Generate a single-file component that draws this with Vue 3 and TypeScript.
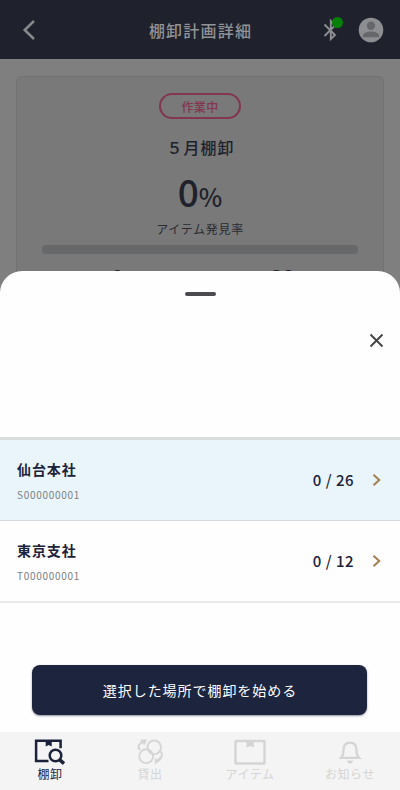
<script setup lang="ts">
interface Place {
  name: string
  code: string
  found: number
  total: number
  selected: boolean
}

interface Tab {
  id: 'stock' | 'lend' | 'item' | 'notice'
  label: string
}

const places: Place[] = [
  { name: '仙台本社', code: 'S000000001', found: 0, total: 26, selected: true },
  { name: '東京支社', code: 'T000000001', found: 0, total: 12, selected: false },
]

const tabs: Tab[] = [
  { id: 'stock', label: '棚卸' },
  { id: 'lend', label: '貸出' },
  { id: 'item', label: 'アイテム' },
  { id: 'notice', label: 'お知らせ' },
]
</script>

<template>
  <div class="phone">
    <div class="backdrop">
      <header class="header">
        <svg class="back" width="14" height="22" viewBox="0 0 14 22"><path d="M12 2 2.700 11l9.300 9" /></svg>
        <h1 class="title">棚卸計画詳細</h1>
        <div class="tools">
          <span class="bluetooth">
            <svg width="16" height="24" viewBox="0 0 16 24"><path d="M2.500 6.500l10.500 10.500-4.200 4V3l4.200 4.500L2.500 18" /></svg>
            <i class="dot"></i>
          </span>
          <svg class="avatar" width="26" height="26" viewBox="0 0 26 26">
            <circle cx="13" cy="13" r="12.3" fill="#8d8e91" />
            <circle cx="13" cy="8.7" r="4.2" fill="#66676a" />
            <path d="M4.8 20.3v-1.2c0-2.8 4.2-4.5 8.2-4.5s8.2 1.7 8.2 4.5v1.2z" fill="#66676a" />
          </svg>
        </div>
      </header>
      <section class="card">
        <span class="status">作業中</span>
        <h2 class="plan">５月棚卸</h2>
        <div class="rate"><b>0</b><span>%</span></div>
        <div class="caption">アイテム発見率</div>
        <div class="progress"></div>
        <div class="counts"><b>0</b><b>38</b></div>
      </section>
    </div>

    <div class="sheet">
      <div class="sheet-head">
        <i class="handle"></i>
        <svg class="close" width="15" height="15" viewBox="0 0 15 15"><path d="M1.500 1.500l12 12M13.500 1.500l-12 12" /></svg>
      </div>
      <ul class="places">
        <li v-for="place in places" :key="place.code" class="place" :class="{ selected: place.selected }">
          <div class="place-text">
            <div class="name">{{ place.name }}</div>
            <div class="code">{{ place.code }}</div>
          </div>
          <div class="count">{{ place.found }} / {{ place.total }}</div>
          <svg class="chevron" width="9" height="14" viewBox="0 0 9 14"><path d="M1.500 1.700 7.200 7l-5.700 5.300" /></svg>
        </li>
      </ul>
      <button class="start">選択した場所で棚卸を始める</button>
      <nav class="tabs">
        <div v-for="tab in tabs" :key="tab.id" class="tab" :class="{ active: tab.id === 'stock' }">
          <svg v-if="tab.id === 'stock'" width="32" height="28" viewBox="0 0 32 28" fill="none" stroke="currentColor">
            <path d="M14.500 24H2.100V3.700h24.500v7.500" stroke-width="2.500" />
            <path d="M11.700 3h6v6.500l-3-1.400-3 1.400z" fill="currentColor" stroke="none" />
            <circle cx="21.500" cy="18.500" r="5.800" stroke-width="2.500" />
            <path d="M25.500 22.600l4.500 4" stroke-width="3.500" />
          </svg>
          <svg v-else-if="tab.id === 'lend'" width="32" height="28" viewBox="0 0 32 28" fill="none" stroke="currentColor" stroke-width="1.900">
            <circle cx="20.200" cy="10.300" r="6.800" />
            <circle cx="12.200" cy="19.200" r="6.900" />
            <path d="M6 13.200C2.800 9.500 5 5.500 11.500 4.500M6.500 3.500h5.200l-2 4" />
            <path d="M26.600 14.200c2.600 3.500 1.200 8.800-5.300 11.300M27.500 19.500l-5.700 6v-4" />
          </svg>
          <svg v-else-if="tab.id === 'item'" width="32" height="28" viewBox="0 0 32 28" fill="none" stroke="currentColor">
            <rect x="1.500" y="4" width="29" height="22.400" rx="0.500" stroke-width="2.500" />
            <path d="M12.500 3.500h7.200v7l-3.600-1.400-3.600 1.400z" fill="currentColor" stroke="none" />
          </svg>
          <svg v-else width="32" height="28" viewBox="0 0 32 28" fill="none" stroke="currentColor" stroke-width="2.300">
            <path d="M7 20.800c2.400-2.200 2.500-4 2.500-7.700 0-4.800 2.600-7.400 6.500-7.400s6.500 2.600 6.500 7.400c0 3.700.1 5.500 2.500 7.700z" />
            <path d="M13 23.500h6c-.3 4-5.700 4-6 0z" fill="currentColor" stroke="none" />
          </svg>
          <span>{{ tab.label }}</span>
        </div>
      </nav>
    </div>
  </div>
</template>

<style>
body {
  margin: 0;
}
</style>

<style scoped>
.phone {
  position: relative;
  width: 400px;
  height: 790px;
  overflow: hidden;
  background: #7f7f7f;
  font-family: "Noto Sans CJK JP", sans-serif;
  color: #1d223b;
}
.header {
  display: grid;
  grid-template-columns: 100px 1fr 100px;
  align-items: center;
  height: 59px;
  box-sizing: border-box;
  padding-top: 1px;
  background: #1f212d;
}
.back {
  margin-left: 22px;
  fill: none;
  stroke: #88898c;
  stroke-width: 2.500;
}
.title {
  margin: 0;
  padding-left: 1px;
  font-size: 16px;
  line-height: 24px;
  font-weight: 500;
  letter-spacing: 1.200px;
  text-align: center;
  color: #929396;
}
.tools {
  display: flex;
  align-items: center;
  gap: 12px;
  padding-left: 22px;
}
.bluetooth {
  position: relative;
  display: flex;
  width: 24px;
}
.bluetooth svg {
  fill: none;
  stroke: #8d8e91;
  stroke-width: 1.900;
}
.dot {
  position: absolute;
  left: 10px;
  top: -1px;
  width: 11px;
  height: 11px;
  border-radius: 50%;
  background: #078009;
}
.card {
  display: flex;
  flex-direction: column;
  align-items: center;
  box-sizing: border-box;
  width: 368px;
  height: 240px;
  margin: 17px 16px 0;
  padding-top: 16px;
  border: 1px solid #707273;
  border-radius: 6px;
  background: #797979;
}
.status {
  box-sizing: border-box;
  width: 82px;
  height: 26px;
  border: 2px solid #82364f;
  border-radius: 13px;
  font-size: 12px;
  line-height: 23px;
  font-weight: 500;
  letter-spacing: 0.300px;
  text-align: center;
  color: #82364f;
}
.plan {
  margin: 16px 0 0 1px;
  font-size: 16px;
  line-height: 24px;
  font-weight: 500;
  letter-spacing: 1px;
  color: #20222b;
}
.rate {
  display: flex;
  align-items: baseline;
  height: 55px;
  margin-top: 5px;
  line-height: 55px;
  color: #20222b;
}
.rate b {
  font-size: 37px;
  font-weight: 500;
}
.rate span {
  font-size: 25px;
  font-weight: 500;
}
.caption {
  margin-top: 1px;
  font-size: 12px;
  line-height: 18px;
  letter-spacing: 0.700px;
  color: #2a2c33;
}
.progress {
  flex: none;
  width: 316px;
  height: 9px;
  margin-top: 7px;
  border-radius: 4px;
  background: #666869;
}
.counts {
  display: flex;
  width: 330px;
  margin-top: 7px;
  font-size: 20px;
  line-height: 31px;
  text-align: center;
  color: #20222b;
}
.counts b {
  flex: 1;
}
.sheet {
  position: absolute;
  left: 0;
  right: 0;
  top: 271px;
  bottom: 0;
  display: flex;
  flex-direction: column;
  border-radius: 22px 22px 0 0;
  overflow: hidden;
  background: #fefefe;
}
.sheet-head {
  display: flex;
  flex-direction: column;
  box-sizing: border-box;
  height: 169px;
  padding-top: 21px;
  border-bottom: 3px solid #d9dddd;
}
.handle {
  align-self: center;
  width: 31px;
  height: 4px;
  border-radius: 2px;
  background: #4b4a4e;
}
.close {
  align-self: flex-end;
  margin: 37px 16px 0 0;
  fill: none;
  stroke: #444;
  stroke-width: 1.900;
}
.places {
  margin: 0;
  padding: 0;
  list-style: none;
}
.place {
  display: flex;
  align-items: center;
  box-sizing: border-box;
  height: 81px;
  padding: 0 19px 0 17px;
  border-bottom: 1px solid #d4dadd;
}
.place + .place {
  height: 82px;
  border-bottom: 2px solid #e9eaea;
}
.selected {
  background: #e9f5fb;
}
.place-text {
  flex: 1;
}
.name {
  font-size: 14px;
  line-height: 24px;
  font-weight: 700;
  letter-spacing: 0.900px;
}
.code {
  margin-top: 5px;
  font-size: 10px;
  line-height: 18px;
  letter-spacing: 0.700px;
  color: #7b8087;
}
.count {
  font-size: 15px;
  line-height: 22px;
  font-weight: 500;
  letter-spacing: 0.500px;
}
.chevron {
  margin-left: 18px;
  fill: none;
  stroke: #a58358;
  stroke-width: 2.200;
}
.start {
  width: 335px;
  height: 50px;
  margin: 62px auto 0 32px;
  padding: 0 0 0 1px;
  border: 0;
  border-radius: 8px;
  background: #1d243e;
  box-shadow: 0 1px 2px rgba(29, 36, 62, 0.500);
  font-family: inherit;
  font-size: 14px;
  line-height: 22px;
  font-weight: 400;
  letter-spacing: 0.950px;
  color: #fff;
}
.tabs {
  display: grid;
  grid-template-columns: repeat(4, 1fr);
  height: 58px;
  margin-top: auto;
  background: #f4f4f4;
}
.tab {
  display: flex;
  flex-direction: column;
  align-items: center;
  padding-top: 5px;
  color: #d5d5d5;
}
.tab svg {
  flex: none;
}
.tab span {
  font-size: 12px;
  line-height: 18px;
  letter-spacing: 0.600px;
}
.active {
  color: #1d223b;
}
</style>
